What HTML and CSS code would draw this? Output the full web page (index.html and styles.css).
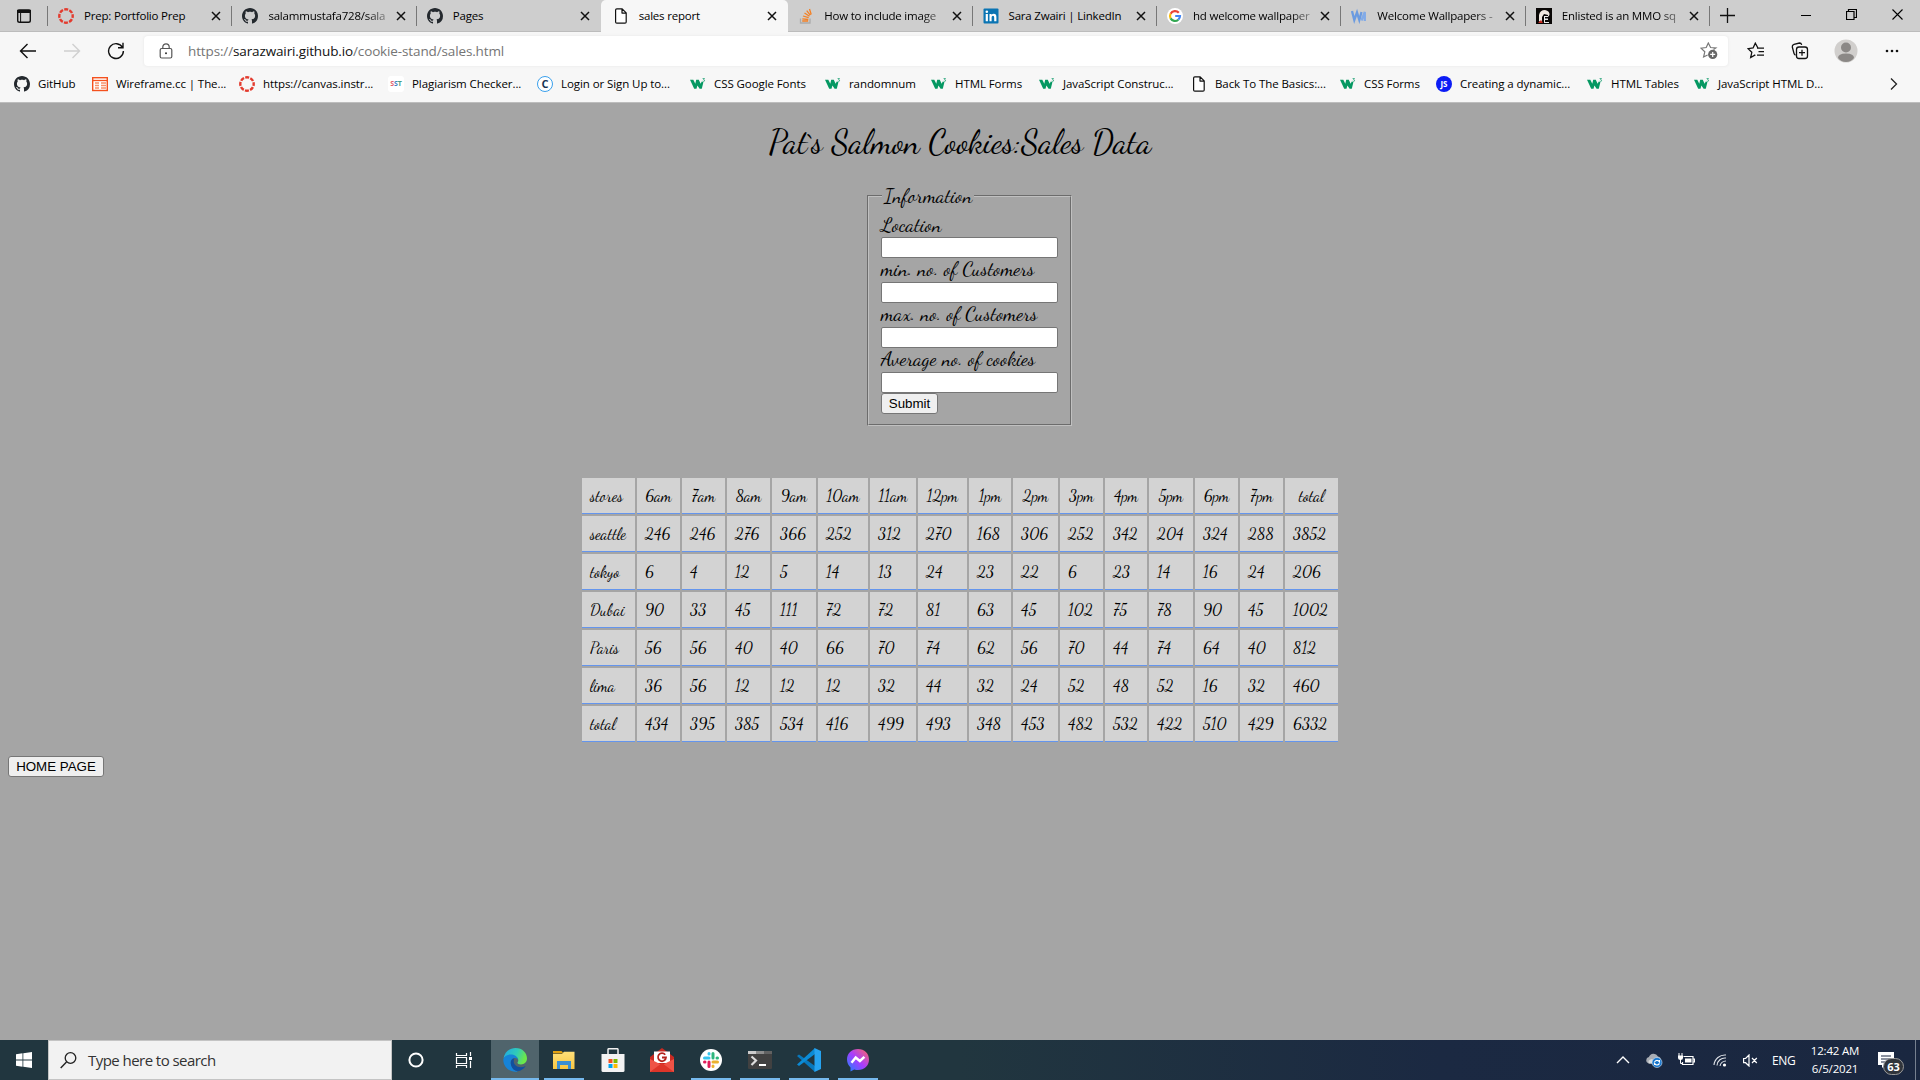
FILE: index.html
```html
<!DOCTYPE html>
<html lang="en">
<head>
<meta charset="utf-8">
<title>sales report</title>
<link rel="stylesheet" href="styles.css">
</head>
<body>
<svg class="defs" width="0" height="0">
  <defs>
    <linearGradient id="edgeA" x1="0" y1="0" x2="1" y2="0.3"><stop offset="0" stop-color="#20a8e8"/><stop offset=".6" stop-color="#30cbb8"/><stop offset="1" stop-color="#6ce84a"/></linearGradient>
    <linearGradient id="msgA" x1="0" y1="1" x2="1" y2="0"><stop offset="0" stop-color="#1487ff"/><stop offset=".5" stop-color="#a83cff"/><stop offset="1" stop-color="#ff6a60"/></linearGradient>
    <linearGradient id="foldA" x1="0" y1="0" x2="0" y2="1"><stop offset="0" stop-color="#ffe07a"/><stop offset="1" stop-color="#f9c640"/></linearGradient>
  </defs>
  <symbol id="github" viewBox="0 0 16 16"><path fill="#24292e" fill-rule="evenodd" d="M8 0C3.58 0 0 3.58 0 8c0 3.54 2.29 6.53 5.47 7.59.4.07.55-.17.55-.38 0-.19-.01-.82-.01-1.49-2.01.37-2.53-.49-2.69-.94-.09-.23-.48-.94-.82-1.13-.28-.15-.68-.52-.01-.53.63-.01 1.08.58 1.23.82.72 1.21 1.87.87 2.33.66.07-.52.28-.87.51-1.07-1.78-.2-3.64-.89-3.64-3.95 0-.87.31-1.59.82-2.15-.08-.2-.36-1.02.08-2.12 0 0 .67-.21 2.2.82.64-.18 1.32-.27 2-.27s1.36.09 2 .27c1.53-1.04 2.2-.82 2.2-.82.44 1.1.16 1.92.08 2.12.51.56.82 1.27.82 2.15 0 3.07-1.87 3.75-3.65 3.95.29.25.54.73.54 1.48 0 1.07-.01 1.93-.01 2.2 0 .21.15.46.55.38A8.01 8.01 0 0 0 16 8c0-4.42-3.58-8-8-8z"/></symbol>
  <symbol id="canvas" viewBox="0 0 16 16"><circle cx="8" cy="8" r="6.7" fill="none" stroke="#e33b2e" stroke-width="2.4" stroke-dasharray="4 1.26" stroke-dashoffset="2"/></symbol>
  <symbol id="page" viewBox="0 0 16 16"><path fill="#fff" stroke="#111" stroke-width="1.2" stroke-linejoin="round" d="M3.800.8h5.400l4 4v9.200q0 1.200-1.200 1.200H3.800q-1.200 0-1.200-1.200V2Q2.600.8 3.800.8zM9 .9v4.200h4.200"/></symbol>
  <symbol id="w3" viewBox="0 0 16 16"><path fill="#059862" d="M0 3.800h3.300l2 4 .9-4h2.600l1.800 4 1.200-2.300 1.600.8-1.600 6.400h-2.200L7.400 9.600l-.9 3.100H4.200z"/><path fill="none" stroke="#3bab84" stroke-width=".9" d="M12.600 2.500h1.900l-1 1.300q1.400 0 1.100 1.200-.7.900-2 .2"/></symbol>
  <symbol id="close" viewBox="0 0 10 10"><path stroke="#111" stroke-width="1.500" d="M1 1l8 8M9 1L1 9"/></symbol>
</svg>

<header class="browser">
  <div class="tabstrip">
    <div class="tab-actions"><svg width="16" height="16" viewBox="0 0 16 16"><rect x="1.700" y="2.200" width="12.600" height="12" rx="1.800" fill="none" stroke="#111" stroke-width="1.400"/><path d="M1.500 2h13v2.500h-13zM4.600 5v9" stroke="#111" fill="#111" stroke-width="1"/></svg></div>
    <div class="tab"><svg class="fav"><use href="#canvas"/></svg><span>Prep: Portfolio Prep</span><svg class="x"><use href="#close"/></svg></div>
    <div class="tab"><svg class="fav"><use href="#github"/></svg><span class="fade">salammustafa728/sala</span><svg class="x"><use href="#close"/></svg></div>
    <div class="tab"><svg class="fav"><use href="#github"/></svg><span>Pages</span><svg class="x"><use href="#close"/></svg></div>
    <div class="tab active"><svg class="fav"><use href="#page"/></svg><span>sales report</span><svg class="x"><use href="#close"/></svg></div>
    <div class="tab"><svg class="fav" viewBox="0 0 16 16"><path d="M2.500 10.500V15h9.500v-4.500" fill="none" stroke="#aaa" stroke-width="1.300"/><path d="M4.200 13h6M4.300 10.800l6 .7M5 8l5.700 1.700M6.500 5l5 3.200M8.700 2.600l3.600 4.600M11.500 1l1.700 5.500" stroke="#f48024" stroke-width="1.300"/></svg><span class="fade">How to include image</span><svg class="x"><use href="#close"/></svg></div>
    <div class="tab"><svg class="fav" viewBox="0 0 16 16"><rect width="15" height="15" x=".5" y=".5" rx="1" fill="#0a74b3"/><path fill="#fff" d="M2.700 6h2.200v7.200H2.700zM6.500 6h2.100v1q.7-1.200 2.200-1.200 2.600 0 2.600 3.100v4.300h-2.200V9.500q0-1.800-1.200-1.800-1.400 0-1.400 1.900v3.600H6.500z"/><circle cx="3.800" cy="3.800" r="1.300" fill="#fff"/></svg><span>Sara Zwairi | LinkedIn</span><svg class="x"><use href="#close"/></svg></div>
    <div class="tab"><svg class="fav" viewBox="0 0 16 16"><circle cx="8" cy="8" r="8" fill="#fff"/><g fill="none" stroke-width="2.200"><path stroke="#ea4335" d="M11.800 4.800A5 5 0 0 0 3.600 5.700"/><path stroke="#fbbc05" d="M3.600 5.700a5 5 0 0 0 0 4.700"/><path stroke="#34a853" d="M3.600 10.400a5 5 0 0 0 7.700 1.300"/><path stroke="#4285f4" d="M11.300 11.700A5 5 0 0 0 13 8H8.200"/></g></svg><span class="fade">hd welcome wallpaper</span><svg class="x"><use href="#close"/></svg></div>
    <div class="tab"><svg class="fav" viewBox="0 0 16 16"><path d="M1 3l2.300 9L6 4.500 8.300 12 10.500 4" fill="none" stroke="#6b9be0" stroke-width="2.300"/><path d="M10.500 12.500L13.800 4v9" fill="none" stroke="#82abe8" stroke-width="2.300"/></svg><span class="fade">Welcome Wallpapers -</span><svg class="x"><use href="#close"/></svg></div>
    <div class="tab"><svg class="fav" viewBox="0 0 16 16"><rect width="16" height="16" fill="#090706"/><path fill="#f0e9e2" d="M3 13V7q1-5 6-5 5 1 4.500 5L12 9V7L8 6 6 9v6z"/><path fill="#eee" d="M8 8h4v1H9v1.500h3V12H9v2h4v1H8z"/><path d="M2 15l3-3 2 3z" fill="#c52a20"/></svg><span class="fade">Enlisted is an MMO sq</span><svg class="x"><use href="#close"/></svg></div>
    <div class="newtab"><svg width="15" height="15"><path d="M7.500 0v15M0 7.500h15" stroke="#111" stroke-width="1.300"/></svg></div>
    <div class="winctl">
      <svg width="10" height="10"><path d="M0 5.500h10" stroke="#000"/></svg>
      <svg width="11" height="11"><path d="M.5 2.500h7.500v8H.5zM2.500 2.500v-2h8v8H8" fill="none" stroke="#000" stroke-width="1.200"/></svg>
      <svg width="11" height="11"><path d="M.5.5l10 10m0-10l-10 10" stroke="#000" stroke-width="1.100"/></svg>
    </div>
  </div>

  <div class="toolbar">
    <div class="nav">
      <svg width="18" height="16"><path d="M8.500 1L1.500 8l7 7M1.500 8H17" fill="none" stroke="#111" stroke-width="1.400"/></svg>
      <svg width="18" height="16"><path d="M9.500 1l7 7-7 7M16.500 8H1" fill="none" stroke="#d0d0d0" stroke-width="1.400"/></svg>
      <svg width="18" height="18"><path d="M15.500 5.500A7.400 7.400 0 1 0 16.400 9M16 .8v5h-5" fill="none" stroke="#111" stroke-width="1.400"/></svg>
    </div>
    <div class="address">
      <svg width="14" height="16"><path d="M3.800 5.500V4a3.200 3.200 0 0 1 6.400 0v1.500" fill="none" stroke="#555" stroke-width="1.200"/><rect x="1.200" y="5.500" width="11.600" height="9.500" rx="1.500" fill="none" stroke="#555" stroke-width="1.200"/><circle cx="7" cy="10.300" r="1" fill="#333"/></svg>
      <p class="url">https://<b>sarazwairi.github.io</b>/cookie-stand/sales.html</p>
      <svg class="addfav" width="18" height="18"><path d="M13.500 7.500l2.300-1.600-5.200-.4L8.300 1 6.200 5.500 1 6.200l3.800 3.600L3.600 15l4-2" fill="none" stroke="#777" stroke-width="1.200"/><circle cx="12.700" cy="12.400" r="4.600" fill="#666"/><path d="M12.700 9.900v5m-2.500-2.500h5" stroke="#fff" stroke-width="1.200"/></svg>
    </div>
    <div class="tools">
      <svg width="18" height="18"><path d="M10 6.200h7M11.500 9.700H17M10 13.200h7M10.800 5.800L8.300 1.200 6.100 6l-5 .7 3.700 3.600L3.700 15.500l4.600-2.600" fill="none" stroke="#111" stroke-width="1.300"/></svg>
      <svg width="18" height="18"><path d="M4.500 13.200Q3.300 12.500 3 11.300L1.300 5Q1 3 3 2.300L8.500 1q1.700 0 2.200 1.800" fill="none" stroke="#111" stroke-width="1.300"/><rect x="5.500" y="5" width="11" height="11.500" rx="2.500" fill="none" stroke="#111" stroke-width="1.300"/><path d="M11 7.700v6m-3-3h6" stroke="#111" stroke-width="1.300"/></svg>
      <svg width="24" height="24"><circle cx="12" cy="12" r="11.500" fill="#d1cfcd"/><circle cx="12" cy="8.500" r="5" fill="#8b8886"/><path d="M4 19q0-4.500 8-4.500t8 4.500q-3 4-8 4t-8-4z" fill="#8b8886"/></svg>
      <svg width="16" height="4"><g fill="#111"><circle cx="3" cy="2" r="1.300"/><circle cx="8" cy="2" r="1.300"/><circle cx="13" cy="2" r="1.300"/></g></svg>
    </div>
  </div>

  <nav class="bookmarks">
    <a><svg><use href="#github"/></svg>GitHub</a>
    <a><svg viewBox="0 0 16 16"><rect x=".7" y="1.700" width="14.600" height="12.800" fill="#fff" stroke="#f4511e" stroke-width="1.400"/><path d="M1 4.500h14" stroke="#f4511e" stroke-width="1.300"/><path d="M3 7h4M3 9.500h4M3 12h4M9 7h5M9 9.500h5M9 12h5" stroke="#f79068" stroke-width="1.300"/></svg>Wireframe.cc | The...</a>
    <a><svg><use href="#canvas"/></svg>https://canvas.instr...</a>
    <a><i class="sst"><em>S</em><em>S</em><em>T</em></i>Plagiarism Checker...</a>
    <a><i class="cc">C</i>Login or Sign Up to...</a>
    <a><svg><use href="#w3"/></svg>CSS Google Fonts</a>
    <a><svg><use href="#w3"/></svg>randomnum</a>
    <a><svg><use href="#w3"/></svg>HTML Forms</a>
    <a><svg><use href="#w3"/></svg>JavaScript Construc...</a>
    <a><svg><use href="#page"/></svg>Back To The Basics:...</a>
    <a><svg><use href="#w3"/></svg>CSS Forms</a>
    <a><i class="js">JS</i>Creating a dynamic...</a>
    <a><svg><use href="#w3"/></svg>HTML Tables</a>
    <a><svg><use href="#w3"/></svg>JavaScript HTML D...</a>
    <svg class="more" viewBox="0 0 8 14"><path d="M1 1.500L6.500 7 1 12.500" fill="none" stroke="#222" stroke-width="1.300"/></svg>
  </nav>
</header>

<main>
  <h1>Pat`s Salmon Cookies:Sales Data</h1>
  <form>
    <fieldset>
      <legend>Information</legend>
      <label>Location</label><input type="text">
      <label>min. no. of Customers</label><input type="text">
      <label>max. no. of Customers</label><input type="text">
      <label>Average no. of cookies</label><input type="text">
      <button type="button" class="submit">Submit</button>
    </fieldset>
  </form>
  <table>
    <colgroup><col class="c53"><col class="c43"><col class="c43"><col class="c43"><col class="c44"><col class="c50"><col class="c46"><col class="c49"><col class="c42"><col class="c45"><col class="c43"><col class="c42"><col class="c44"><col class="c43"><col class="c43"><col class="c53"></colgroup>
    <tr><td>stores</td><th>6am</th><th>7am</th><th>8am</th><th>9am</th><th>10am</th><th>11am</th><th>12pm</th><th>1pm</th><th>2pm</th><th>3pm</th><th>4pm</th><th>5pm</th><th>6pm</th><th>7pm</th><th>total</th></tr>
    <tr><td>seattle</td><td>246</td><td>246</td><td>276</td><td>366</td><td>252</td><td>312</td><td>270</td><td>168</td><td>306</td><td>252</td><td>342</td><td>204</td><td>324</td><td>288</td><td>3852</td></tr>
    <tr><td>tokyo</td><td>6</td><td>4</td><td>12</td><td>5</td><td>14</td><td>13</td><td>24</td><td>23</td><td>22</td><td>6</td><td>23</td><td>14</td><td>16</td><td>24</td><td>206</td></tr>
    <tr><td>Dubai</td><td>90</td><td>33</td><td>45</td><td>111</td><td>72</td><td>72</td><td>81</td><td>63</td><td>45</td><td>102</td><td>75</td><td>78</td><td>90</td><td>45</td><td>1002</td></tr>
    <tr><td>Paris</td><td>56</td><td>56</td><td>40</td><td>40</td><td>66</td><td>70</td><td>74</td><td>62</td><td>56</td><td>70</td><td>44</td><td>74</td><td>64</td><td>40</td><td>812</td></tr>
    <tr><td>lima</td><td>36</td><td>56</td><td>12</td><td>12</td><td>12</td><td>32</td><td>44</td><td>32</td><td>24</td><td>52</td><td>48</td><td>52</td><td>16</td><td>32</td><td>460</td></tr>
    <tr><td>total</td><td>434</td><td>395</td><td>385</td><td>534</td><td>416</td><td>499</td><td>493</td><td>348</td><td>453</td><td>482</td><td>532</td><td>422</td><td>510</td><td>429</td><td>6332</td></tr>
  </table>
  <button type="button" class="home">HOME PAGE</button>
</main>

<footer class="taskbar">
  <div class="start"><svg width="16" height="16"><path fill="#fff" d="M0 2.200l6.500-.9v6.300H0zM7.300 1.200L16 0v7.600H7.300zM0 8.400h6.500v6.300L0 13.800zM7.300 8.400H16V16l-8.700-1.200z"/></svg></div>
  <div class="search"><svg width="17" height="17"><circle cx="10.500" cy="6" r="5.300" fill="none" stroke="#222" stroke-width="1.300"/><path d="M6.500 10L.7 16" stroke="#222" stroke-width="1.400"/></svg><span>Type here to search</span></div>
  <div class="tile"><svg width="18" height="18"><circle cx="9" cy="9" r="6.600" fill="none" stroke="#fff" stroke-width="2"/></svg></div>
  <div class="tile"><svg width="18" height="17"><path d="M1.500 1v2.500h10V1M1.500 16v-2.500h10V16M1.500 5.500h10v6h-10zM15.500 0v4M15.500 9v7" fill="none" stroke="#fff" stroke-width="1.200"/><path d="M14 5h3v3h-3z" fill="#fff"/></svg></div>
  <div class="apps">
    <div class="app current"><svg width="24" height="24"><path fill="url(#edgeA)" d="M.5 10.500C1.500 4 6.500 0 12.500 0 19.500 0 24 5 24 10.500c0 3.800-2.800 5.900-6 5.900-2.500 0-4-1-3.500-2 .8-1 1-2 .5-3.300C14 8.800 11.500 7.500 8.500 7.500 5 7.500 1.500 9 .5 10.500z"/><path fill="#1683d8" d="M.3 11C2 7.500 5.500 6 9 6.500c3.500.5 6 2.800 6 5.500-.8-1.800-2.500-2.500-4.500-1.800-3 1-3.500 4.500-2 7.800 1.200 3 3.500 5 6.500 5.500C8 25 0 20 .3 11z"/><path fill="#104f9f" d="M9.700 10.800c-4 3-1.500 11.700 5 12.500 3-.5 6.300-2.300 8-5.300-4 2-8 1.500-10.500-1-1.800-1.900-1.900-4.300-.8-6.600z"/></svg></div>
    <div class="app run"><svg width="24" height="24"><path fill="#e3a111" d="M1 3h8.500l2 2.500H1z"/><path fill="url(#foldA)" d="M1 6h9l2-2.200h10.500V21H1z"/><path fill="#3b8fd4" d="M5 13h14v8h-3v-4H8v4H5z"/></svg></div>
    <div class="app"><svg width="24" height="24"><path d="M7 7V1.500Q7 .7 8 .7h8q1 0 1 .8V7" fill="none" stroke="#f1f1f1" stroke-width="1.500"/><path fill="#f3f3f3" d="M.5 6h23v16.500q0 1.500-1.500 1.500H2Q.5 24 .5 22.500z"/><path fill="#f25022" d="M7.500 11h4v4h-4z"/><path fill="#7fba00" d="M12.500 11h4v4h-4z"/><path fill="#00a4ef" d="M7.500 16h4v4h-4z"/><path fill="#ffb900" d="M12.500 16h4v4h-4z"/></svg></div>
    <div class="app"><svg width="24" height="24"><path fill="#c82a22" d="M0 9L12 0l12 9v15H0z"/><path fill="#fff" d="M4 3.500h16V15H4z"/><path fill="#ef5346" d="M0 11l12 6 12-6v13H0z"/><path fill="#dd3529" d="M0 24l12-9 12 9z"/><path d="M15.200 6.800A4 4 0 1 0 16 9.500h-4" fill="none" stroke="#b3241d" stroke-width="1.800"/></svg></div>
    <div class="app run"><svg width="24" height="24"><circle cx="12" cy="12" r="11" fill="#fff"/><g fill="none" stroke-width="3" stroke-linecap="round"><path stroke="#36c5f0" d="M10 5.500V6M5.500 10H10"/><path stroke="#2eb67d" d="M14 5.500V10M18.500 10h-.5"/><path stroke="#ecb22e" d="M14 14h4.500M14 18.500V18"/><path stroke="#e01e5a" d="M10 14v4.500M5.500 14H6"/></g></svg></div>
    <div class="app run"><svg width="24" height="24"><rect y="3" width="24" height="18" rx="1" fill="#414141"/><path fill="#ccc" d="M0 3h8v3H0z"/><path fill="#8d8d8d" d="M8 3h8v3H8z"/><path fill="#626262" d="M16 3h8v3h-8z"/><path d="M3.500 8.500L8 12.500l-4.500 4.500" fill="none" stroke="#ddd" stroke-width="2.200"/><path d="M11 17h7" stroke="#fff" stroke-width="2"/></svg></div>
    <div class="app run"><svg width="24" height="24"><path fill="#0878bd" d="M0 8l2-1.500L18 18v6z"/><path fill="#0b8bd6" d="M0 16.500L18 0v6L2 18z"/><path fill="#26a3f0" d="M17.500 0L24 3v18l-6.500 3z"/></svg></div>
    <div class="app run"><svg width="24" height="24"><path fill="url(#msgA)" d="M12 1C5.500 1 1 5.500 1 11.500c0 3.300 1.400 6 3.500 7.900V23.500l3.700-2c1.200.4 2.500.5 3.800.5 6.500 0 11-4.500 11-10.500S18.500 1 12 1z"/><path d="M5.500 14.700L9.700 9.500l4.200 3.500 4.500-4.200" fill="none" stroke="#fff" stroke-width="2.500"/></svg></div>
  </div>
  <div class="tray">
    <svg class="t1" viewBox="0 0 14 8"><path d="M1 7l6-6 6 6" fill="none" stroke="#fff" stroke-width="1.400"/></svg>
    <svg class="t2" viewBox="0 0 18 16"><path fill="#a9adb4" d="M3.500 11.500a3.300 3.300 0 0 1 .4-6.400A5 5 0 0 1 13 4.500q3 .5 3 3.500l-3 3.500z"/><path fill="#d7d9dc" d="M4 11.500Q2 8 7 7l4 4.500z"/><circle cx="12" cy="10.500" r="5" fill="#1374ce" stroke="#dceaf7" stroke-width=".6"/><path d="M9.500 9.800q2.500-3 5 0V8m0 3.500q-2.500 3-5 0V13" fill="none" stroke="#fff" stroke-width="1.200"/></svg>
    <svg class="t3" viewBox="0 0 17 14"><path d="M5.500 3.500H15v8H4.500V9M15 6h1.500v3H15" fill="none" stroke="#fff" stroke-width="1.200"/><path fill="#fff" d="M7 5.500h6.500v4H7zM0 2.500h5V5q0 2-2.500 2T0 5z"/><path d="M1 0v3m3-3v3M2.500 6v4.500h2" stroke="#fff" fill="none"/></svg>
    <svg class="t4" viewBox="0 0 14 14"><path d="M1 12A11 11 0 0 1 13 2M4 12.500A8 8 0 0 1 13 5M7 13a6 6 0 0 1 6-5" fill="none" stroke="#dfe3e9" stroke-width="1.100"/><circle cx="11.500" cy="12" r="1.600" fill="#fff"/></svg>
    <svg class="t5" viewBox="0 0 15 13"><path d="M.6 4.500h2L6 1v11L2.600 8.700h-2zM9 4l4.800 5m0-5L9 9" fill="none" stroke="#fff" stroke-width="1.200"/></svg>
    <span class="lang">ENG</span>
    <div class="clock"><span>12:42 AM</span><span>6/5/2021</span></div>
    <div class="notice"><svg width="16" height="16"><path fill="#fff" d="M0 0h16v13H7l-3 3v-3H0z"/><path d="M3 4h10M3 7h10M3 10h6" stroke="#1a2740" stroke-width="1.200"/></svg><b>63</b></div>
    <i class="peek"></i>
  </div>
</footer>
</body>
</html>
```
FILE: styles.css
```css
* { box-sizing: border-box; }
body {
  margin: 0;
  width: 1920px;
  height: 1080px;
  overflow: hidden;
  display: flex;
  flex-direction: column;
  background: #a5a5a5;
  color: #000;
  font-family: "Segoe UI", "Open Sans", sans-serif;
}
svg { display: block; flex: none; }
.defs { position: absolute; }

/* Browser chrome */
.browser { height: 103px; flex: none; background: #f7f7f7; border-bottom: 1px solid #bdbdbd; }
.tabstrip { height: 32px; display: flex; background: #cecece; box-shadow: inset 0 -1px #bcbcbc; }
.tab-actions { width: 48px; padding: 8px 0 0 16px; }
.tab { width: 184.400px; display: flex; align-items: center; padding: 0 11px 0 10px; font-size: 11.500px; letter-spacing: -.2px; position: relative; }
.tab::before { content: ""; position: absolute; left: -1px; top: 6px; height: 20px; width: 1px; background: #777; }
.tab.active::before, .tab.active + .tab::before { display: none; }
.tab .fav { width: 16px; height: 16px; margin-right: 10px; }
.tab span { flex: 1; min-width: 0; white-space: nowrap; line-height: 20px; }
.tab .fade { -webkit-mask-image: linear-gradient(90deg, #000 80%, rgba(0,0,0,.3) 98%); mask-image: linear-gradient(90deg, #000 80%, rgba(0,0,0,.3) 98%); }
.tab .x { width: 10px; height: 10px; margin-left: 6px; }
.tab.active { width: 187px; padding-left: 11.500px; background: #f7f7f7; border-radius: 5px 5px 0 0; }
.newtab { width: 40px; padding: 8px 0 0 10px; position: relative; }
.newtab::before { content: ""; position: absolute; left: -1px; top: 6px; height: 20px; width: 1px; background: #777; }
.winctl { margin-left: auto; display: flex; align-items: center; gap: 35px; padding: 0 17px 3px 0; }

.toolbar { height: 38px; display: flex; align-items: center; }
.nav { width: 144px; display: flex; align-items: center; gap: 26px; padding-left: 19px; }
.address { width: 1584px; height: 30px; display: flex; align-items: center; background: #fff; border-radius: 4px; padding: 0 10px 0 15px; box-shadow: 0 0 3px #e4e4e4; }
.url { margin: 0 0 0 15px; color: #757575; font-size: 13.500px; letter-spacing: -.13px; }
.url b { color: #111; font-weight: 400; }
.addfav { margin-left: auto; }
.tools { display: flex; align-items: center; padding-left: 19px; }
.tools svg + svg { margin-left: 26px; }
.tools svg:nth-child(3) { margin-left: 25px; }

.bookmarks {
  height: 28px;
  display: grid;
  grid-template-columns: 78px 147px 149px 149px 153px 135px 106px 108px 152px 149px 96px 151px 107px 196px 8px;
  align-items: center;
  padding: 0 0 1px 14px;
}
.bookmarks a { display: flex; align-items: center; font-size: 11.500px; letter-spacing: -.08px; white-space: nowrap; }
.bookmarks a > svg, .bookmarks i { width: 16px; height: 16px; margin-right: 8px; flex: none; }
.bookmarks .more { width: 8px; height: 14px; }
.bookmarks i { font-style: normal; display: flex; align-items: center; justify-content: center; font-weight: 700; }
.sst { background: #fff; border-radius: 3px; font-size: 7px; color: #e35d6a; }
.sst em { font-style: normal; }
.sst em:nth-child(2) { color: #3d7fc0; }
.sst em:nth-child(3) { color: #4b9c83; }
.cc { border: 1.500px solid #3aa0ec; border-radius: 50%; font-size: 11px; color: #153454; background: #fff; }
.js { background: #0c1cf5; border-radius: 50%; color: #fff; font-size: 8px; }

/* Sales page */
main { flex: 1; font-family: "Dancing Script", cursive; }
h1 { margin: 0; padding-top: 20px; height: 81px; line-height: 40px; text-align: center; font-size: 33px; font-weight: 400; white-space: nowrap; }
form { padding-left: 867px; }
fieldset { display: flex; flex-direction: column; width: 205px; height: 242px; margin: 0; padding: 7px 12px 0; border: 2px groove #c0c0c0; font-size: 20px; }
legend { padding: 0 2px; margin-left: 1px; line-height: 24px; height: 24px; }
label { display: block; height: 24px; line-height: 23px; white-space: nowrap; }
label:first-of-type { height: 22px; line-height: 20px; }
input { display: block; width: 177px; height: 21px; margin: 0; padding: 1px 2px; border: 1px solid #767676; border-radius: 2px; background: #fff; }
button { display: block; height: 21px; margin: 0; padding: 0; border: 1px solid #767676; border-radius: 3px; background: #efefef; color: #000; font: 13.333px "Liberation Sans", Arial, sans-serif; }
.submit { width: 57px; }
table { table-layout: fixed; width: 760px; margin: 50px 0 0 580px; border-spacing: 2px; border-collapse: separate; font-size: 16px; }
td, th { height: 36px; padding: 0 0 0 8px; background: #d3d3d3; border-bottom: 1px solid #6495ed; font-weight: 400; text-align: left; line-height: 30px; white-space: nowrap; }
th { padding: 0; text-align: center; }
.c42 { width: 42px; }
.c43 { width: 43px; }
.c44 { width: 44px; }
.c45 { width: 45px; }
.c46 { width: 46px; }
.c49 { width: 49px; }
.c50 { width: 50px; }
.c53 { width: 53px; }
.home { width: 96px; margin: 12px 0 0 8px; }

/* Taskbar */
.taskbar { height: 40px; flex: none; display: flex; background: linear-gradient(90deg, #21363f 0, #21363f 50%, #1b2942 75%, #1a2740 100%); color: #fff; }
.start { width: 48px; display: flex; align-items: center; justify-content: center; }
.search { width: 344px; display: flex; align-items: center; gap: 11px; padding-left: 11px; background: #f2f2f2; border: 1px solid #c4c4c4; color: #333; font-size: 15px; letter-spacing: -.55px; }
.tile { width: 48px; display: flex; align-items: center; justify-content: center; }
.apps { display: flex; gap: 1px; margin-left: 3px; }
.app { width: 48px; display: flex; align-items: center; justify-content: center; }
.app.current { background: #50646c; border-bottom: 2px solid #76b9ed; padding-top: 2px; }
.app.run { background: linear-gradient(#76b9ed, #76b9ed) center bottom / 40px 2px no-repeat; }
.tray { margin-left: auto; width: 304px; display: flex; align-items: center; }
.t1 { width: 14px; height: 8px; }
.t2 { width: 18px; height: 16px; margin-left: 15px; }
.t3 { width: 17px; height: 14px; margin-left: 15px; }
.t4 { width: 14px; height: 14px; margin-left: 18px; }
.t5 { width: 15px; height: 13px; margin-left: 16px; }
.lang { width: 38px; margin-left: 14px; font-size: 12px; letter-spacing: -.4px; }
.clock { width: 50px; display: flex; flex-direction: column; align-items: center; line-height: 18px; font-size: 11.500px; letter-spacing: -.2px; white-space: nowrap; padding-bottom: 1px; }
.notice { position: relative; width: 16px; height: 16px; margin-left: 18px; }
.notice b { position: absolute; left: 5px; top: 6px; width: 21px; height: 17px; border: 1px solid #999; border-radius: 9px; background: #30343b; text-align: center; line-height: 15px; font-size: 11px; }
.peek { width: 1px; height: 40px; margin-left: auto; margin-right: 4px; background: #76808f; }
```
